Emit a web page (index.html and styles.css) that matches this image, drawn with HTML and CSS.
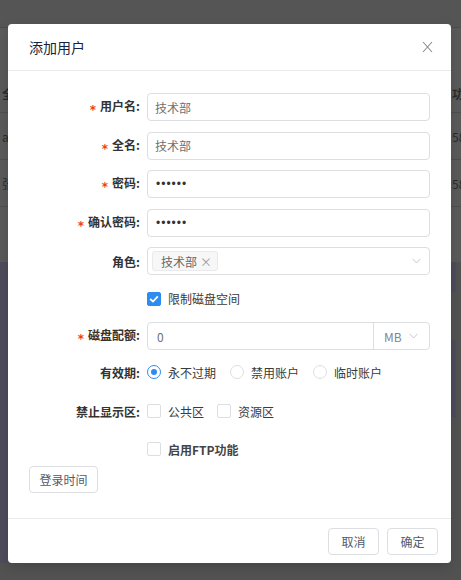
FILE: index.html
```html
<!DOCTYPE html>
<html lang="zh-CN">
<head>
<meta charset="utf-8">
<title>添加用户</title>
<link rel="stylesheet" href="styles.css">
</head>
<body>
<div class="page">
  <div class="topbar"></div>
  <div class="table">
    <div class="trow thead"><span class="cell-l">全名</span><span class="cell-r">功能</span></div>
    <div class="trow"><span class="cell-l">admin</span><span class="cell-r">58</span></div>
    <div class="trow"><span class="cell-l">张三</span><span class="cell-r">58</span></div>
  </div>
  <div class="lower">
    <div class="lower-l"></div>
    <div class="lower-r"></div>
  </div>
</div>

<div class="modal">
  <div class="modal-header">
    <span class="modal-title">添加用户</span>
    <svg class="close" width="11" height="12" viewBox="0 0 11 12"><path d="M1 1L10 11M10 1L1 11" stroke="#8a8a8a" stroke-width="1.1" fill="none"/></svg>
  </div>
  <div class="modal-body">
    <div class="form-item">
      <label class="label req">用户名:</label>
      <input class="input" type="text" value="技术部">
    </div>
    <div class="form-item">
      <label class="label req">全名:</label>
      <input class="input" type="text" value="技术部">
    </div>
    <div class="form-item">
      <label class="label req">密码:</label>
      <input class="input pw" type="password" value="123456">
    </div>
    <div class="form-item">
      <label class="label req">确认密码:</label>
      <input class="input pw" type="password" value="123456">
    </div>
    <div class="form-item">
      <label class="label">角色:</label>
      <div class="select">
        <span class="tag">技术部<span class="tag-x">×</span></span>
        <svg class="chev" width="9" height="6" viewBox="0 0 9 6"><path d="M0.5 0.8L4.5 5L8.5 0.8" stroke="#c5c8ce" stroke-width="1" fill="none"/></svg>
      </div>
    </div>
    <div class="form-item h26">
      <span class="label"></span>
      <span class="cb checked"><svg width="10" height="8" viewBox="0 0 10 8"><path d="M1.2 4L4 6.6L8.8 1.4" stroke="#fff" stroke-width="1.8" fill="none"/></svg></span>
      <span class="opt-text">限制磁盘空间</span>
    </div>
    <div class="form-item mb10">
      <label class="label req">磁盘配额:</label>
      <div class="group">
        <input class="group-input" type="text" value="0">
        <div class="addon">MB<svg class="chev" width="9" height="6" viewBox="0 0 9 6"><path d="M0.5 0.8L4.5 5L8.5 0.8" stroke="#c5c8ce" stroke-width="1" fill="none"/></svg></div>
      </div>
    </div>
    <div class="form-item opt mb15">
      <label class="label">有效期:</label>
      <span class="radio-item"><span class="radio checked"><span class="dot"></span></span><span class="opt-text">永不过期</span></span>
      <span class="radio-item"><span class="radio"></span><span class="opt-text">禁用账户</span></span>
      <span class="radio-item"><span class="radio"></span><span class="opt-text">临时账户</span></span>
    </div>
    <div class="form-item opt mb14">
      <label class="label">禁止显示区:</label>
      <span class="cb-item"><span class="cb"></span><span class="opt-text">公共区</span></span>
      <span class="cb-item"><span class="cb"></span><span class="opt-text">资源区</span></span>
    </div>
    <div class="form-item opt mb5">
      <span class="label"></span>
      <span class="cb"></span><span class="opt-text strong">启用FTP功能</span>
    </div>
    <button class="btn btn-login" type="button">登录时间</button>
  </div>
  <div class="modal-footer">
    <button class="btn" type="button">取消</button>
    <button class="btn" type="button">确定</button>
  </div>
</div>
</body>
</html>
```

FILE: styles.css
```css
* { box-sizing: border-box; }
html, body { margin: 0; padding: 0; }
body {
  width: 461px;
  height: 580px;
  overflow: hidden;
  position: relative;
  background: #555555;
  font-family: "Noto Sans CJK SC", "Noto Sans", sans-serif;
  font-size: 12px;
}

/* background page under the mask */
.page { height: 580px; display: flex; flex-direction: column; }
.topbar { height: 28px; background: #555555; border-bottom: 1px solid #4c4c4c; }
.table { height: 234px; background: #5a5a5a; padding-top: 47px; }
.trow {
  display: flex;
  justify-content: space-between;
  align-items: center;
  height: 47px;
  border-bottom: 1px solid #4e4e4e;
  color: #2a2a2a;
  font-size: 12px;
}
.trow.thead { height: 38px; font-weight: bold; }
.cell-l { margin-left: 2px; }
.cell-r { width: 9px; overflow: hidden; white-space: nowrap; }
.lower { flex: 1; background: #525252; display: flex; justify-content: space-between; }
.lower-l { width: 8px; height: 301px; background: #4e4c5b; }
.lower-r {
  width: 5px;
  margin-right: 5px;
  background: linear-gradient(#4e4b5c 0 30px, #525252 30px 78px, #4e4b5c 78px 155px, #525252 155px);
}

/* modal */
.modal {
  position: absolute;
  left: 8px;
  top: 24px;
  width: 443px;
  height: 539px;
  background: #fff;
  border-radius: 4px;
  box-shadow: 0 4px 12px rgba(0, 0, 0, 0.15);
  display: flex;
  flex-direction: column;
}
.modal-header {
  height: 47px;
  border-bottom: 1px solid #e8eaec;
  display: flex;
  align-items: center;
  justify-content: space-between;
  padding: 0 18px 0 21px;
}
.modal-title { font-size: 14px; color: #17233d; }
.close { display: block; }

.modal-body {
  flex: 1;
  padding: 22px 21px 0 21px;
}
.form-item {
  display: flex;
  align-items: center;
  height: 28px;
  margin-bottom: 10.5px;
}
.form-item.h26 { height: 26px; }
.form-item.opt { height: 24px; }
.form-item.mb10 { margin-bottom: 10px; }
.form-item.mb15 { margin-bottom: 15px; }
.form-item.mb14 { margin-bottom: 14px; }
.form-item.mb5 { margin-bottom: 5px; }

.label {
  width: 118px;
  flex-shrink: 0;
  padding-right: 7px;
  text-align: right;
  color: #333;
  font-weight: bold;
  font-size: 12px;
}
.label.req::before {
  content: "*";
  display: inline-block;
  margin-right: 4px;
  color: #ed4014;
  font-family: "DejaVu Sans", sans-serif;
  font-size: 12px;
  font-weight: bold;
  vertical-align: -3px;
}

.input {
  flex: 1;
  height: 28px;
  border: 1px solid #dcdee2;
  border-radius: 4px;
  padding: 0 7px;
  font-family: inherit;
  font-size: 12px;
  color: #707070;
  outline: none;
  background: #fff;
}
.input.pw {
  font-family: "Liberation Sans", sans-serif;
  color: #333;
  letter-spacing: 1px;
  padding-left: 8px;
}

.select {
  flex: 1;
  height: 28px;
  border: 1px solid #dcdee2;
  border-radius: 4px;
  display: flex;
  align-items: center;
  padding: 0 8px 0 4px;
}
.tag {
  height: 20px;
  display: inline-flex;
  align-items: center;
  padding: 0 5px 0 8px;
  border: 1px solid #e8eaec;
  border-radius: 3px;
  background: #f7f7f7;
  color: #666;
  font-size: 12px;
}
.tag-x { margin-left: 3px; color: #999; font-size: 12px; }
.chev { display: block; margin-left: auto; }

.cb {
  width: 14px;
  height: 14px;
  flex-shrink: 0;
  border: 1px solid #dcdee2;
  border-radius: 2px;
  background: #fff;
  display: inline-flex;
  align-items: center;
  justify-content: center;
}
.cb.checked { background: #2d8cf0; border-color: #2d8cf0; }
.cb svg { display: block; }
.opt-text { margin-left: 7px; color: #3a3a3a; font-size: 12px; }
.opt-text.strong { font-weight: bold; color: #444; }

.radio-item, .cb-item { display: inline-flex; align-items: center; }
.radio-item { margin-right: 14px; }
.cb-item { margin-right: 13px; }
.radio {
  width: 14px;
  height: 14px;
  flex-shrink: 0;
  border: 1px solid #dcdee2;
  border-radius: 50%;
  display: inline-flex;
  align-items: center;
  justify-content: center;
  background: #fff;
}
.radio.checked { border-color: #2d8cf0; }
.dot { width: 6px; height: 6px; border-radius: 50%; background: #2d8cf0; }

.group {
  flex: 1;
  height: 28px;
  border: 1px solid #dcdee2;
  border-radius: 4px;
  display: flex;
}
.group-input {
  flex: 1;
  min-width: 0;
  border: none;
  outline: none;
  padding: 0 9px;
  font-family: inherit;
  font-size: 12px;
  color: #707070;
  background: transparent;
}
.addon {
  width: 56px;
  border-left: 1px solid #dcdee2;
  display: flex;
  align-items: center;
  padding: 0 11px 0 10px;
  color: #808695;
  font-size: 12px;
}
.addon .chev { margin-left: auto; }

.btn {
  height: 27px;
  padding: 0 10px;
  border: 1px solid #dcdee2;
  border-radius: 4px;
  background: #fff;
  color: #515a6e;
  font-family: inherit;
  font-size: 12px;
  cursor: pointer;
}
.btn-login { width: 69px; padding: 0; }

.modal-footer {
  border-top: 1px solid #e8eaec;
  padding: 9px 13px 8px 0;
  display: flex;
  justify-content: flex-end;
  gap: 8px;
}
.modal-footer .btn { width: 51px; padding: 0; }
```
